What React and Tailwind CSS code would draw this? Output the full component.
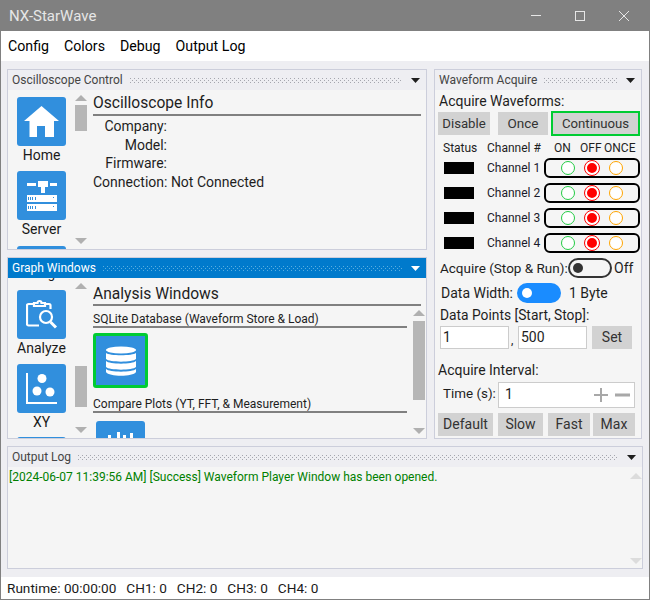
import React from "react";

const FONT = { fontFamily: 'Roboto, sans-serif' };

function Grip({ light }) {
  return (
    <div
      className={
        "h-[5px] flex-1 bg-[length:4px_4px] " +
        (light
          ? "bg-[radial-gradient(circle_at_0.5px_0.5px,#5aaee0_0.8px,transparent_0.8px),radial-gradient(circle_at_2.5px_2.5px,#5aaee0_0.8px,transparent_0.8px)]"
          : "bg-[radial-gradient(circle_at_0.5px_0.5px,#a5a6ae_0.8px,transparent_0.8px),radial-gradient(circle_at_2.5px_2.5px,#a5a6ae_0.8px,transparent_0.8px)]")
      }
    />
  );
}

function Header({ title, active }) {
  return (
    <div
      className={
        "relative z-10 flex h-[20px] shrink-0 items-center gap-[7px] pl-[4px] pr-[6px] text-[12px] whitespace-nowrap " +
        (active ? "bg-[#007acc] text-white" : "bg-[#eeeef2] text-[#444444]")
      }
    >
      <span>{title}</span>
      <Grip light={active} />
      <svg width="9" height="5" viewBox="0 0 9 5" className="ml-[2px]">
        <path d="M0 0H9L4.5 5Z" fill={active ? "#ffffff" : "#1e1e1e"} />
      </svg>
    </div>
  );
}

function ScrollBar({ className, thumbTop, thumbH, pale }) {
  const c = pale ? "#dcdcdc" : "#b0b0b0";
  return (
    <div className={"relative flex w-[12px] shrink-0 flex-col items-center justify-between " + className}>
      <svg width="12" height="6" viewBox="0 0 12 6"><path d="M0 6H12L6 0Z" fill={c} /></svg>
      {thumbH ? <div className="absolute left-0 w-[12px] bg-[#b6b6b6]" style={{ top: thumbTop, height: thumbH }} /> : null}
      <svg width="12" height="6" viewBox="0 0 12 6"><path d="M0 0H12L6 6Z" fill={c} /></svg>
    </div>
  );
}

function Tile({ children, label }) {
  return (
    <div className="flex h-[74px] w-[49px] shrink-0 flex-col items-center">
      <div className="flex h-[49px] w-[49px] shrink-0 items-center justify-center rounded-[3px] bg-[#318fdd]">{children}</div>
      <div className="text-[14px] leading-[18px] text-[#1a1a1a] whitespace-nowrap">{label}</div>
    </div>
  );
}

const HomeIcon = () => (
  <svg width="35" height="31" viewBox="0 0 35 31" fill="#fff">
    <path d="M17.500 0 0 15h5.500V31H13V20h8V31h9V15h5Z" />
  </svg>
);
const ServerIcon = () => (
  <svg width="30" height="30" viewBox="0 0 30 30" fill="#fff">
    <path d="M0 2h9v3H0zM23 2h7v3h-7zM11 0h10v6h-3v6h-4V6h-3z" />
    <path d="M0 14h30v7H0zM0 23h30v7H0z" />
    <g fill="#318fdd">
      <path d="M1 16h1v3H1zM3 16h1v3H3zM5 16h1v3H5zM8 16h1v3H8zM26 16h1v1h-1zM1 25h1v3H1zM3 25h1v3H3zM5 25h1v3H5zM8 25h1v3H8zM26 25h1v1h-1z" />
    </g>
  </svg>
);
const AnalyzeIcon = () => (
  <svg width="32" height="32" viewBox="0 0 32 32" fill="none" stroke="#fff" strokeWidth="2.2">
    <path d="M8 5H2.500a1.500 1.500 0 0 0-1.500 1.500V25a1.500 1.500 0 0 0 1.500 1.500H13" />
    <path d="M19 5h4a1.500 1.500 0 0 1 1.500 1.500V10" />
    <path d="M8 7V4h3.500a2 2 0 0 1 4 0H19v3Z" />
    <circle cx="20" cy="18" r="6" />
    <path d="M24.500 23 30 28.500" strokeWidth="3" />
  </svg>
);
const XYIcon = () => (
  <svg width="31" height="31" viewBox="0 0 31 31" fill="#fff">
    <path d="M0 0h2v29h29v2H0z" />
    <circle cx="16" cy="5.500" r="4.500" />
    <circle cx="11" cy="18" r="4.500" />
    <circle cx="24" cy="19" r="4.500" />
  </svg>
);
const DbIcon = () => (
  <svg width="32" height="30" viewBox="0 0 32 30" fill="#fff">
    <ellipse cx="16" cy="4" rx="15" ry="3.500" />
    <path d="M1 7c3 3 27 3 30 0v6c-3 3.500-27 3.500-30 0zM1 15c3 3.500 27 3.500 30 0v6c-3 3.500-27 3.500-30 0zM1 23c3 3.500 27 3.500 30 0v3c-3 5-27 5-30 0z" />
  </svg>
);

function Rule({ label, size, width, mt }) {
  return (
    <div className={mt} style={{ width }}>
      <div className={size + " whitespace-nowrap"}>{label}</div>
      <div className="h-[2px] bg-[#808080]" />
    </div>
  );
}

function Btn({ children, className }) {
  return (
    <div className={"flex h-[23px] items-center justify-center bg-[#d2d2d2] text-[14px] text-[#333333] " + className}>
      {children}
    </div>
  );
}

function ChannelRow({ n }) {
  return (
    <div className="flex h-[25px] items-center pl-[9px] text-[12px] text-[#1a1a2a] whitespace-nowrap">
      <div className="h-[12px] w-[30px] bg-black" />
      <div className="ml-[13px] w-[57px]">Channel {n}</div>
      <div className="flex h-[20px] w-[96px] items-center gap-[10px] rounded-[6px] border-2 border-black pl-[15px]">
        <div className="h-[14px] w-[14px] rounded-full border border-[#22cc44] bg-white" />
        <div className="h-[14px] w-[14px] rounded-full border-[2px] border-white bg-[#ff0000] outline outline-1 outline-[#ff0000]" />
        <div className="h-[14px] w-[14px] rounded-full border border-[#ffa500] bg-white" />
      </div>
    </div>
  );
}

export default function App() {
  return (
    <div className="flex h-[600px] w-[650px] flex-col overflow-hidden border border-t-0 border-[#808080] text-[#1e1e1e]" style={FONT}>
      <div className="-mx-px flex h-[31px] shrink-0 items-center justify-between bg-[#808080] pl-[9px] text-[15px] text-[#e6e6e6]">
        <span className="pt-[1px]">NX-StarWave</span>
        <div className="flex items-center gap-[34px] pr-[21px]">
          <div className="h-px w-[10px] bg-[#e6e6e6]" />
          <div className="h-[10px] w-[10px] border border-[#e6e6e6]" />
          <svg width="10" height="10" viewBox="0 0 10 10" stroke="#e6e6e6"><path d="M0 0 10 10M10 0 0 10" /></svg>
        </div>
      </div>

      <div className="flex h-[30px] shrink-0 items-center gap-[15px] bg-white pl-[7px] pt-[1px] text-[14.200px] text-black">
        <span>Config</span><span>Colors</span><span>Debug</span><span>Output Log</span>
      </div>

      <div className="flex min-h-0 flex-1 flex-col gap-[7px] bg-[#eeeef2] px-[6px] pb-[8px] pt-[8px]">
        <div className="flex h-[370px] gap-[7px]">
          <div className="flex w-[420px] flex-col gap-[7px]">
            <section className="flex h-[181px] flex-col overflow-hidden border border-[#cccedb] bg-[#f5f5f5]">
              <Header title="Oscilloscope Control" />
              <div className="flex min-h-0 flex-1">
                <div className="flex w-[67px] shrink-0 flex-col overflow-hidden pl-[9px] pt-[7px]">
                  <Tile label="Home"><HomeIcon /></Tile>
                  <Tile label="Server"><ServerIcon /></Tile>
                  <div className="mt-[1px] h-[49px] w-[49px] shrink-0 rounded-[3px] bg-[#318fdd]" />
                </div>
                <ScrollBar className="mb-[5px] mt-[5px]" thumbTop="10px" thumbH="26px" />
                <div className="ml-[6px] w-[328px] pt-[1px] text-[14px]">
                  <Rule label="Oscilloscope Info" size="pt-[2px] text-[15.600px] leading-[21px]" width="328px" />
                  <div className="mt-[1px] grid grid-cols-[74px_1fr] leading-[18.700px]">
                    <div className="text-right">Company:</div><div />
                    <div className="text-right">Model:</div><div />
                    <div className="text-right">Firmware:</div><div />
                    <div className="col-span-2">Connection: Not Connected</div>
                  </div>
                </div>
              </div>
            </section>

            <section className="flex h-[182px] flex-col overflow-hidden border border-[#cccedb] bg-[#f5f5f5]">
              <Header title="Graph Windows" active />
              <div className="flex min-h-0 flex-1">
                <div className="flex w-[67px] shrink-0 flex-col items-start overflow-hidden pl-[9px]">
                  <div className="mt-[-14px] w-[49px] text-center text-[13px] leading-[19px] text-[#1a1a1a]">Histogram</div>
                  <div className="mt-[7px]" />
                  <Tile label="Analyze"><AnalyzeIcon /></Tile>
                  <Tile label="XY"><XYIcon /></Tile>
                  <div className="mt-[-1px] h-[49px] w-[49px] shrink-0 rounded-[3px] bg-[#318fdd]" />
                </div>
                <ScrollBar className="mb-[5px] mt-[5px]" thumbTop="83px" thumbH="41px" />
                <div className="ml-[6px] flex min-w-0 flex-1 flex-col overflow-hidden pt-[3px]">
                  <Rule label="Analysis Windows" size="pt-[4px] text-[15.600px] leading-[19px]" width="328px" />
                  <div className="flex min-h-0 flex-1">
                    <div className="w-[314px] shrink-0 overflow-hidden pt-[3px] text-[12px]">
                      <Rule label="SQLite Database (Waveform Store & Load)" size="pt-[4px] leading-[13px]" width="314px" />
                      <div className="mt-[5px] flex h-[55px] w-[55px] items-center justify-center rounded-[3px] border-[3px] border-[#00cc33] bg-[#318fdd]"><DbIcon /></div>
                      <Rule label="Compare Plots (YT, FFT, & Measurement)" size="pt-[4px] leading-[13px]" width="314px" mt="mt-[6px]" />
                      <div className="ml-[3px] mt-[8px] flex h-[49px] w-[49px] justify-center rounded-[3px] bg-[#318fdd] pt-[11px]">
                        <svg width="30" height="8" viewBox="0 0 30 8" fill="#fff"><path d="M2 3h3v5H2zM11 0h3v8h-3zM17 3h3v5h-3zM24 1h3v7h-3z" /></svg>
                      </div>
                    </div>
                    <ScrollBar className="mb-[4px] ml-[6px] mt-[4px]" thumbTop="11px" thumbH="79px" />
                  </div>
                </div>
              </div>
            </section>
          </div>

          <section className="flex w-[208px] flex-col overflow-hidden border border-[#cccedb] bg-[#f5f5f5]">
            <Header title="Waveform Acquire" />
            <div className="flex flex-1 flex-col text-[14px] whitespace-nowrap">
              <div className="pl-[4px] pt-[1px] leading-[20px]">Acquire Waveforms:</div>
              <div className="flex items-center pl-[3px]">
                <Btn className="w-[52px] !text-[13.200px]">Disable</Btn>
                <Btn className="ml-[8px] w-[50px] !text-[13.500px]">Once</Btn>
                <Btn className="ml-[3px] h-[25px] w-[89px] border-2 border-[#00cc33] !text-[13.200px]">Continuous</Btn>
              </div>
              <div className="flex h-[19px] items-center pl-[8px] pt-[4px] text-[12px]">
                <span className="w-[44px]">Status</span>
                <span className="w-[67px]">Channel #</span>
                <span className="w-[26px]">ON</span>
                <span className="w-[24px]">OFF</span>
                <span>ONCE</span>
              </div>
              <ChannelRow n={1} />
              <ChannelRow n={2} />
              <ChannelRow n={3} />
              <ChannelRow n={4} />
              <div className="mt-[1px] flex h-[24px] items-center pl-[5px] text-[13.500px]">
                <span className="w-[128px]">Acquire (Stop &amp; Run):</span>
                <div className="flex h-[20px] w-[44px] items-center rounded-full border-2 border-[#333333] pl-[3px]">
                  <div className="h-[10px] w-[10px] rounded-full bg-[#333333]" />
                </div>
                <span className="ml-[2px] text-[14px]">Off</span>
              </div>
              <div className="mt-[1px] flex h-[24px] items-center pl-[6px]">
                <span className="w-[76px]">Data Width:</span>
                <div className="flex h-[20px] w-[44px] items-center rounded-full bg-[#1a8cff] pl-[5px]">
                  <div className="h-[10px] w-[10px] rounded-full bg-white" />
                </div>
                <span className="ml-[8px]">1 Byte</span>
              </div>
              <div className="pl-[5px] text-[13.800px] leading-[21px]">Data Points [Start, Stop]:</div>
              <div className="flex items-end pl-[5px]">
                <div className="flex h-[23px] w-[69px] items-center border border-[#cccccc] bg-white pl-[2px]">1</div>
                <span className="w-[9px] pl-[2px] text-[12px]">,</span>
                <div className="flex h-[23px] w-[69px] items-center border border-[#cccccc] bg-white pl-[2px]">500</div>
                <Btn className="ml-[5px] w-[40px]">Set</Btn>
              </div>
              <div className="mt-[11px] pl-[3px] leading-[20px]">Acquire Interval:</div>
              <div className="mt-[1px] flex h-[26px] items-center pl-[8px] pt-[1px]">
                <span className="w-[55px] text-[13.400px]">Time (s):</span>
                <div className="flex h-[26px] w-[137px] items-center justify-between border border-[#cccccc] bg-white pl-[6px] pr-[4px]">
                  <span>1</span>
                  <svg width="36" height="14" viewBox="0 0 36 14" fill="#a8a8a8"><path d="M6 0h2v6h6v2H8v6H6V8H0V6h6zM21 5.500h15v3H21z" /></svg>
                </div>
              </div>
              <div className="mt-[6px] flex pl-[3px]">
                <Btn className="w-[55px]">Default</Btn>
                <Btn className="ml-[5px] w-[45px]">Slow</Btn>
                <Btn className="ml-[5px] w-[42px]">Fast</Btn>
                <Btn className="ml-[3px] w-[42px]">Max</Btn>
              </div>
            </div>
          </section>
        </div>

        <section className="flex min-h-0 flex-1 flex-col overflow-hidden border border-[#cccedb] bg-[#f5f5f5]">
          <Header title="Output Log" />
          <div className="flex min-h-0 flex-1">
            <div className="flex-1 pl-[1px] pt-[1px] text-[12px] leading-[18px] text-[#008000]">
              [2024-06-07 11:39:56 AM] [Success] Waveform Player Window has been opened.
            </div>
            <ScrollBar className="mb-[4px] mt-[6px]" pale />
          </div>
        </section>
      </div>

      <div className="flex h-[22px] shrink-0 items-center gap-[10px] bg-white pl-[6px] text-[13.600px] text-[#1a1a1a]">
        <span>Runtime: 00:00:00</span><span>CH1: 0</span><span>CH2: 0</span><span>CH3: 0</span><span>CH4: 0</span>
      </div>
    </div>
  );
}
